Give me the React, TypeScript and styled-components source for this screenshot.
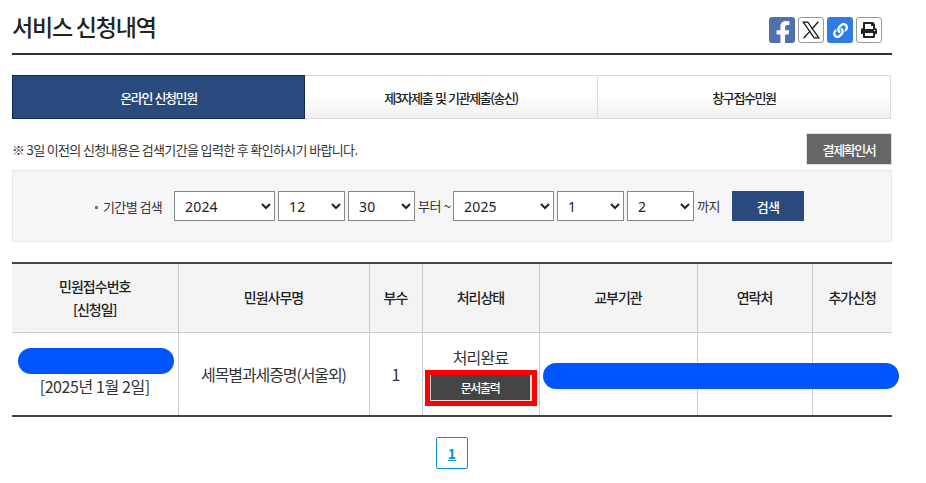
import React from "react";
import styled, { createGlobalStyle } from "styled-components";
import { FaFacebookF, FaLink, FaPrint } from "react-icons/fa";

const Global = createGlobalStyle`
  html, body { margin: 0; padding: 0; background: #fff; }
  body { font-family: "Noto Sans CJK KR", "Noto Sans", sans-serif; color: #222; overflow: hidden; }
  * { box-sizing: border-box; }
`;

const Page = styled.div`
  width: 880px;
  margin-left: 12px;
  position: relative;
`;

const Header = styled.header`
  height: 55px;
  border-bottom: 2px solid #333;
  display: flex;
  justify-content: space-between;
  padding-top: 10px;
`;

const Title = styled.h2`
  margin: 0;
  font-size: 23px;
  line-height: 32px;
  font-weight: 500;
  letter-spacing: -1.2px;
  color: #222;
`;

const Share = styled.div`
  display: flex;
  gap: 3px;
  padding: 7px 10px 0 0;
`;

const ShareButton = styled.span<{ $bg: string; $fg: string; $line?: boolean }>`
  width: 26px;
  height: 26px;
  border-radius: 3px;
  background: ${(p) => p.$bg};
  color: ${(p) => p.$fg};
  border: ${(p) => (p.$line ? "1px solid #999" : "none")};
  display: flex;
  align-items: center;
  justify-content: center;
  overflow: hidden;
`;

const FbGlyph = styled(FaFacebookF)`
  width: 24px;
  height: 24px;
  margin: 6px 0 0 1px;
`;

const Tabs = styled.nav`
  margin-top: 20px;
  width: 879px;
  height: 44px;
  display: grid;
  grid-template-columns: 293px 293px 293px;
`;

const Tab = styled.div<{ $active?: boolean }>`
  display: flex;
  align-items: center;
  justify-content: center;
  font-size: 13px;
  font-weight: 500;
  letter-spacing: -1.4px;
  word-spacing: 1px;
  color: ${(p) => (p.$active ? "#fff" : "#222")};
  background: ${(p) => (p.$active ? "#294a7d" : "linear-gradient(#fff 40%, #f1f1f1)")};
  border: 1px solid ${(p) => (p.$active ? "#10284e" : "#ddd")};
  border-left-width: ${(p) => (p.$active ? "1px" : "0")};
`;

const NoticeRow = styled.div`
  margin-top: 14px;
  height: 32px;
  display: flex;
  justify-content: space-between;
  align-items: center;
`;

const Notice = styled.p`
  margin: 0;
  font-size: 13px;
  letter-spacing: -0.65px;
  color: #333;
`;

const ReceiptButton = styled.button`
  width: 86px;
  height: 32px;
  background: #666;
  border: 1px solid #ddd;
  color: #fff;
  font: 500 13px "Noto Sans CJK KR", sans-serif;
  letter-spacing: -1.4px;
`;

const SearchBox = styled.form`
  margin-top: 5px;
  height: 72px;
  background: #f6f6f9;
  border: 1px solid #e8e8ee;
  display: flex;
  align-items: center;
  padding-left: 81px;
`;

const Label = styled.span`
  font-size: 13px;
  letter-spacing: -0.6px;
  color: #333;
  width: 80px;
  &::before {
    content: "";
    display: inline-block;
    width: 3px;
    height: 3px;
    background: #777;
    margin: 0 5px 0 1px;
    vertical-align: middle;
  }
`;

const DateSelect = styled.select<{ $w: number }>`
  width: ${(p) => p.$w}px;
  height: 30px;
  margin-right: 3px;
  padding-left: 6px;
  font: 14px "Noto Sans", sans-serif;
  letter-spacing: 0.2px;
  color: #222;
  background: #fff;
  border: 1px solid #888;
  border-radius: 0;
`;

const Word = styled.span<{ $w: number }>`
  width: ${(p) => p.$w}px;
  font-size: 13px;
  letter-spacing: -0.4px;
  white-space: nowrap;
  color: #333;
  position: relative;
  top: -1px;
`;

const SearchButton = styled.button`
  width: 72px;
  height: 30px;
  margin-left: 9px;
  background: #294a7d;
  border: none;
  color: #fff;
  font: 500 13px "Noto Sans CJK KR", sans-serif;
  letter-spacing: -0.7px;
`;

const Table = styled.table`
  margin-top: 20px;
  width: 880px;
  table-layout: fixed;
  border-collapse: collapse;
  border-top: 2px solid #444;
  border-bottom: 2px solid #444;
`;

const Th = styled.th`
  height: 69px;
  background: #f4f4f4;
  border-left: 1px solid #ccc;
  border-bottom: 1px solid #ccc;
  font-size: 14px;
  line-height: 23px;
  font-weight: 500;
  letter-spacing: -1px;
  color: #222;
  padding: 0;
  &:first-child { border-left: none; }
`;

const Td = styled.td`
  height: 84px;
  border-left: 1px solid #ccc;
  text-align: center;
  font-size: 16px;
  letter-spacing: -1.1px;
  color: #333;
  padding: 0;
  &:first-child { border-left: none; }
`;

const Blackout = styled.div`
  width: 156px;
  height: 26px;
  margin: 0 0 1px 6px;
  background: #0055ff;
  border-radius: 13px;
`;

const DateText = styled.div`
  line-height: 22px;
  margin-bottom: 2px;
  font-size: 16px;
  letter-spacing: -0.4px;
`;

const Status = styled.div`
  line-height: 20px;
  margin: 0 0 8px;
  letter-spacing: -0.8px;
`;

const PrintButton = styled.button`
  display: block;
  width: 102px;
  height: 26px;
  margin: 0 auto;
  background: #444;
  border: none;
  border-left: 1px solid #ddd;
  border-right: 2px solid #ddd;
  border-bottom: 1px solid #ddd;
  outline: 5px solid #f00;
  color: #fff;
  font: 500 12px "Noto Sans CJK KR", sans-serif;
  letter-spacing: -1.4px;
`;

const WideBlackout = styled.div`
  position: absolute;
  left: 531px;
  top: 363px;
  width: 356px;
  height: 26px;
  background: #0055ff;
  border-radius: 13px;
`;

const Pager = styled.div`
  margin-top: 20px;
  display: flex;
  justify-content: center;
`;

const PageLink = styled.a`
  width: 32px;
  height: 32px;
  border: 1px solid #0d8fdb;
  border-radius: 2px;
  display: flex;
  align-items: center;
  justify-content: center;
  font-size: 14px;
  font-weight: 700;
  color: #0d8fdb;
  text-decoration: underline;
`;

const XGlyph = () => (
  <svg width="22" height="22" viewBox="0 0 24 24" fill="none" stroke="#111" strokeWidth="1.3">
    <path d="M3.5 3.5h5L20.5 20.5h-5z" />
    <path d="M20 3l-7.2 8.2M4 21l7.4-8.4" />
  </svg>
);

const options = (value: string) => <option>{value}</option>;

export default function App() {
  return (
    <Page>
      <Global />
      <Header>
        <Title>서비스 신청내역</Title>
        <Share>
          <ShareButton $bg="#4f6fae" $fg="#fff"><FbGlyph /></ShareButton>
          <ShareButton $bg="#fff" $fg="#111" $line><XGlyph /></ShareButton>
          <ShareButton $bg="#2f7ce6" $fg="#fff"><FaLink size={15} /></ShareButton>
          <ShareButton $bg="#fff" $fg="#222" $line><FaPrint size={16} /></ShareButton>
        </Share>
      </Header>
      <Tabs>
        <Tab $active>온라인 신청민원</Tab>
        <Tab>제3자제출 및 기관제출(송신)</Tab>
        <Tab>창구접수민원</Tab>
      </Tabs>
      <NoticeRow>
        <Notice>※ 3일 이전의 신청내용은 검색기간을 입력한 후 확인하시기 바랍니다.</Notice>
        <ReceiptButton type="button">결제확인서</ReceiptButton>
      </NoticeRow>
      <SearchBox>
        <Label>기간별 검색</Label>
        <DateSelect $w={101}>{options("2024")}</DateSelect>
        <DateSelect $w={67}>{options("12")}</DateSelect>
        <DateSelect $w={67}>{options("30")}</DateSelect>
        <Word $w={35}>부터 ~</Word>
        <DateSelect $w={101}>{options("2025")}</DateSelect>
        <DateSelect $w={67}>{options("1")}</DateSelect>
        <DateSelect $w={67}>{options("2")}</DateSelect>
        <Word $w={26}>까지</Word>
        <SearchButton type="button">검색</SearchButton>
      </SearchBox>
      <Table>
        <colgroup>
          <col width={166} />
          <col width={191} />
          <col width={53} />
          <col width={117} />
          <col width={158} />
          <col width={115} />
          <col width={80} />
        </colgroup>
        <thead>
          <tr>
            <Th>민원접수번호<br />[신청일]</Th>
            <Th>민원사무명</Th>
            <Th>부수</Th>
            <Th>처리상태</Th>
            <Th>교부기관</Th>
            <Th>연락처</Th>
            <Th>추가신청</Th>
          </tr>
        </thead>
        <tbody>
          <tr>
            <Td>
              <Blackout />
              <DateText>[2025년 1월 2일]</DateText>
            </Td>
            <Td>세목별과세증명(서울외)</Td>
            <Td>1</Td>
            <Td>
              <Status>처리완료</Status>
              <PrintButton type="button">문서출력</PrintButton>
            </Td>
            <Td />
            <Td />
            <Td />
          </tr>
        </tbody>
      </Table>
      <WideBlackout />
      <Pager>
        <PageLink>1</PageLink>
      </Pager>
    </Page>
  );
}
